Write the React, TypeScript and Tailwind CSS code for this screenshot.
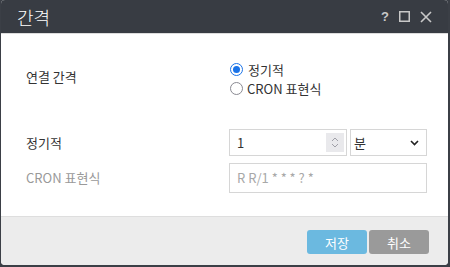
import React from "react";

export default function App() {
  const font = { fontFamily: '"Noto Sans CJK KR", "Noto Sans", sans-serif' };
  return (
    <div className="w-[450px] h-[267px] bg-[#3b3f46] overflow-hidden" style={font}>
      <div className="ml-[1px] w-[447px] h-[265px] rounded-[4px] overflow-hidden flex flex-col bg-white">
        {/* Header */}
        <div className="h-[34px] bg-[#383c43] border-b border-[#dcdcdc] flex items-center pl-[16px] pr-[16px] shrink-0">
          <div className="text-[18px] leading-none text-white font-light">간격</div>
          <div className="ml-auto flex items-center">
            <span className="text-[13px] font-bold text-[#c8c8c8] leading-none mr-[10px]" style={{ fontFamily: '"Liberation Sans", sans-serif' }}>?</span>
            <svg width="11" height="11" viewBox="0 0 11 11" className="mr-[10px]">
              <rect x="0.75" y="0.75" width="9.5" height="9.5" fill="none" stroke="#c8c8c8" strokeWidth="1.5" />
            </svg>
            <svg width="12" height="12" viewBox="0 0 12 12">
              <path d="M1 1L11 11M11 1L1 11" stroke="#c8c8c8" strokeWidth="1.6" />
            </svg>
          </div>
        </div>
        {/* Body */}
        <div className="flex-1 relative text-[13px] text-[#333]">
          <div className="flex pt-[26px]">
            <div className="w-[228px] pl-[25px] pt-[8px] leading-[18px]">연결 간격</div>
            <div className="flex flex-col gap-[1px]">
              <label className="flex items-center h-[18px]">
                <span className="w-[13px] h-[13px] rounded-full border-[1.5px] border-[#1a73e8] flex items-center justify-center mr-[5px] ml-[1px]">
                  <span className="w-[7px] h-[7px] rounded-full bg-[#1a73e8]" />
                </span>
                <span className="leading-none">정기적</span>
              </label>
              <label className="flex items-center h-[18px]">
                <span className="w-[13px] h-[13px] rounded-full border-[1.5px] border-[#8a8a92] mr-[4px] ml-[1px]" />
                <span className="leading-none">CRON 표현식</span>
              </label>
            </div>
          </div>
          <div className="flex items-center mt-[32px]">
            <div className="w-[228px] pl-[25px]">정기적</div>
            <div className="w-[118px] h-[27px] border border-[#d6d6d6] flex items-center pl-[7px] pr-[2px]">
              <span>1</span>
              <div className="ml-auto w-[18px] h-[19px] bg-[#e9e9ec] flex flex-col items-center justify-center gap-[1px]">
                <svg width="8" height="5" viewBox="0 0 8 5"><path d="M1 4L4 1L7 4" fill="none" stroke="#a0a0a8" strokeWidth="1" /></svg>
                <svg width="8" height="5" viewBox="0 0 8 5"><path d="M1 1L4 4L7 1" fill="none" stroke="#a0a0a8" strokeWidth="1" /></svg>
              </div>
            </div>
            <div className="ml-[3px] w-[77px] h-[27px] border border-[#d6d6d6] flex items-center pl-[3px] pr-[7px]">
              <span>분</span>
              <svg className="ml-auto" width="9" height="6" viewBox="0 0 9 6"><path d="M1 1L4.5 4.5L8 1" fill="none" stroke="#222" strokeWidth="1.6" /></svg>
            </div>
          </div>
          <div className="flex items-center mt-[7px]">
            <div className="w-[228px] pl-[25px] text-[#999]">CRON 표현식</div>
            <div className="w-[198px] h-[30px] border border-[#d6d6d6] flex items-center pl-[7px] text-[#a8a8a8]">R R/1 * * * ? *</div>
          </div>
        </div>
        {/* Footer */}
        <div className="h-[49px] bg-[#ececec] border-t border-[#dedede] flex items-start justify-end pt-[13px] pr-[19px] gap-[2px] shrink-0">
          <button className="w-[60px] h-[24px] rounded-[3px] bg-[#6bb9e0] text-white text-[13px] leading-none">저장</button>
          <button className="w-[60px] h-[24px] rounded-[3px] bg-[#9a9a9a] text-white text-[13px] leading-none">취소</button>
        </div>
      </div>
    </div>
  );
}
